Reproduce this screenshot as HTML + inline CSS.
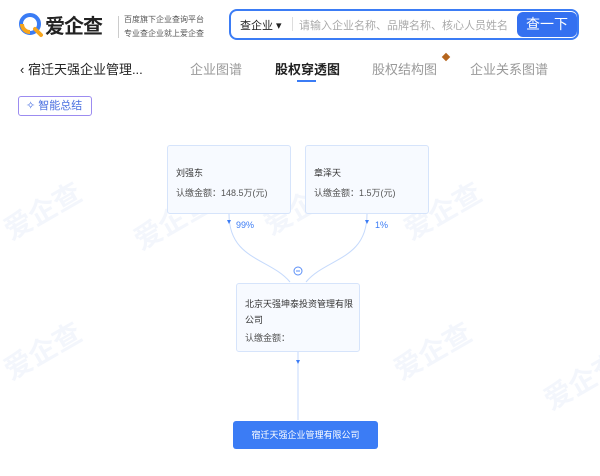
<!DOCTYPE html>
<html><head><meta charset="utf-8"><style>
*{margin:0;padding:0;box-sizing:border-box}
body{width:600px;height:476px;overflow:hidden;background:#fff;font-family:"Liberation Sans","Noto Sans CJK SC",sans-serif;position:relative;color:#333}
.abs{position:absolute;white-space:nowrap}
.box{position:absolute;background:#f7faff;border:1px solid #d6e4fb;border-radius:3px;font-size:9px;color:#333}
.box .l{position:absolute;left:8px;color:#555}
.wm{position:absolute;color:#f3f6fc;font-size:28px;font-weight:bold;transform:rotate(-30deg);white-space:nowrap}
</style></head><body>
<div class="wm" style="left:0;top:190px">爱企查</div>
<div class="wm" style="left:130px;top:200px">爱企查</div>
<div class="wm" style="left:260px;top:185px">爱企查</div>
<div class="wm" style="left:400px;top:190px">爱企查</div>
<div class="wm" style="left:0;top:330px">爱企查</div>
<div class="wm" style="left:390px;top:330px">爱企查</div>
<div class="wm" style="left:540px;top:360px">爱企查</div>
<!-- logo -->
<svg class="abs" style="left:17px;top:11px" width="28" height="28" viewBox="0 0 28 28"><circle cx="13" cy="13" r="9" fill="none" stroke="#3a7cf5" stroke-width="4"/><path d="M5 13a8 8 0 0 0 8 8" fill="none" stroke="#f7a51c" stroke-width="4"/><path d="M18 18l6 6" stroke="#f7a51c" stroke-width="4" stroke-linecap="round"/></svg>
<div class="abs" style="left:45px;top:10px;font-size:20px;font-weight:bold;color:#222;letter-spacing:-1px">爱企查</div>
<div class="abs" style="left:118px;top:16px;height:22px;border-left:1px solid #ccc"></div>
<div class="abs" style="left:124px;top:13px;font-size:8px;color:#555;line-height:14px">百度旗下企业查询平台<br>专业查企业就上爱企查</div>
<div class="abs" style="left:229px;top:9px;width:350px;height:31px;border:2px solid #3b7cf5;border-radius:8px"></div>
<div class="abs" style="left:240px;top:17px;font-size:11px;color:#222">查企业 ▾</div>
<div class="abs" style="left:292px;top:17px;height:14px;border-left:1px solid #ddd"></div>
<div class="abs" style="left:299px;top:17px;font-size:11px;color:#aaa">请输入企业名称、品牌名称、核心人员姓名</div>
<div class="abs" style="left:517px;top:12px;width:60px;height:25px;background:#3470f0;border-radius:6px;color:#fff;font-size:14px;text-align:center;line-height:25px">查一下</div>
<!-- tabs -->
<div class="abs" style="left:20px;top:59px;font-size:13px;color:#222">‹ 宿迁天强企业管理...</div>
<div class="abs" style="left:190px;top:59px;font-size:13px;color:#999">企业图谱</div>
<div class="abs" style="left:275px;top:59px;font-size:13px;color:#222;font-weight:bold">股权穿透图</div>
<div class="abs" style="left:297px;top:80px;width:19px;height:2px;background:#3b7cf5"></div>
<div class="abs" style="left:372px;top:59px;font-size:13px;color:#999">股权结构图</div>
<div class="abs" style="left:443px;top:54px;width:6px;height:6px;background:#b5651d;transform:rotate(45deg)"></div>
<div class="abs" style="left:470px;top:59px;font-size:13px;color:#999">企业关系图谱</div>
<div class="abs" style="left:18px;top:96px;width:74px;height:20px;border:1px solid #9c8cf0;border-radius:3px;font-size:11px;color:#4a6fe0;line-height:18px;padding-left:7px">✧ 智能总结</div>
<!-- lines -->
<svg class="abs" style="left:0;top:0" width="600" height="476"><g fill="none" stroke="#c6dafc" stroke-width="1"><path d="M229 214C229 260 270 258 290 282"/><path d="M367 214C367 260 326 258 306 282"/><path d="M298 352V420"/></g><circle cx="298" cy="271" r="4" fill="#fff" stroke="#5b8ff7"/><path d="M296 271h4" stroke="#5b8ff7"/><path d="M227 220l2 4 2-4z M365 220l2 4 2-4z M296 360l2 4 2-4z" fill="#3b7cf5"/></svg>
<div class="abs" style="left:236px;top:220px;font-size:9px;color:#3b7cf5">99%</div>
<div class="abs" style="left:375px;top:220px;font-size:9px;color:#3b7cf5">1%</div>
<div class="box" style="left:167px;top:145px;width:124px;height:69px"><div class="l" style="top:20px;color:#333">刘强东</div><div class="l" style="top:40px">认缴金额：148.5万(元)</div></div>
<div class="box" style="left:305px;top:145px;width:124px;height:69px"><div class="l" style="top:20px;color:#333">章泽天</div><div class="l" style="top:40px">认缴金额：1.5万(元)</div></div>
<div class="box" style="left:236px;top:283px;width:124px;height:69px"><div class="l" style="top:12px;color:#333;line-height:16px;right:6px">北京天强坤泰投资管理有限公司</div><div class="l" style="top:47px">认缴金额：</div></div>
<div class="abs" style="left:233px;top:421px;width:145px;height:28px;background:#3b7cf5;border-radius:3px;color:#fff;font-size:9px;text-align:center;line-height:28px">宿迁天强企业管理有限公司</div>
</body></html>
